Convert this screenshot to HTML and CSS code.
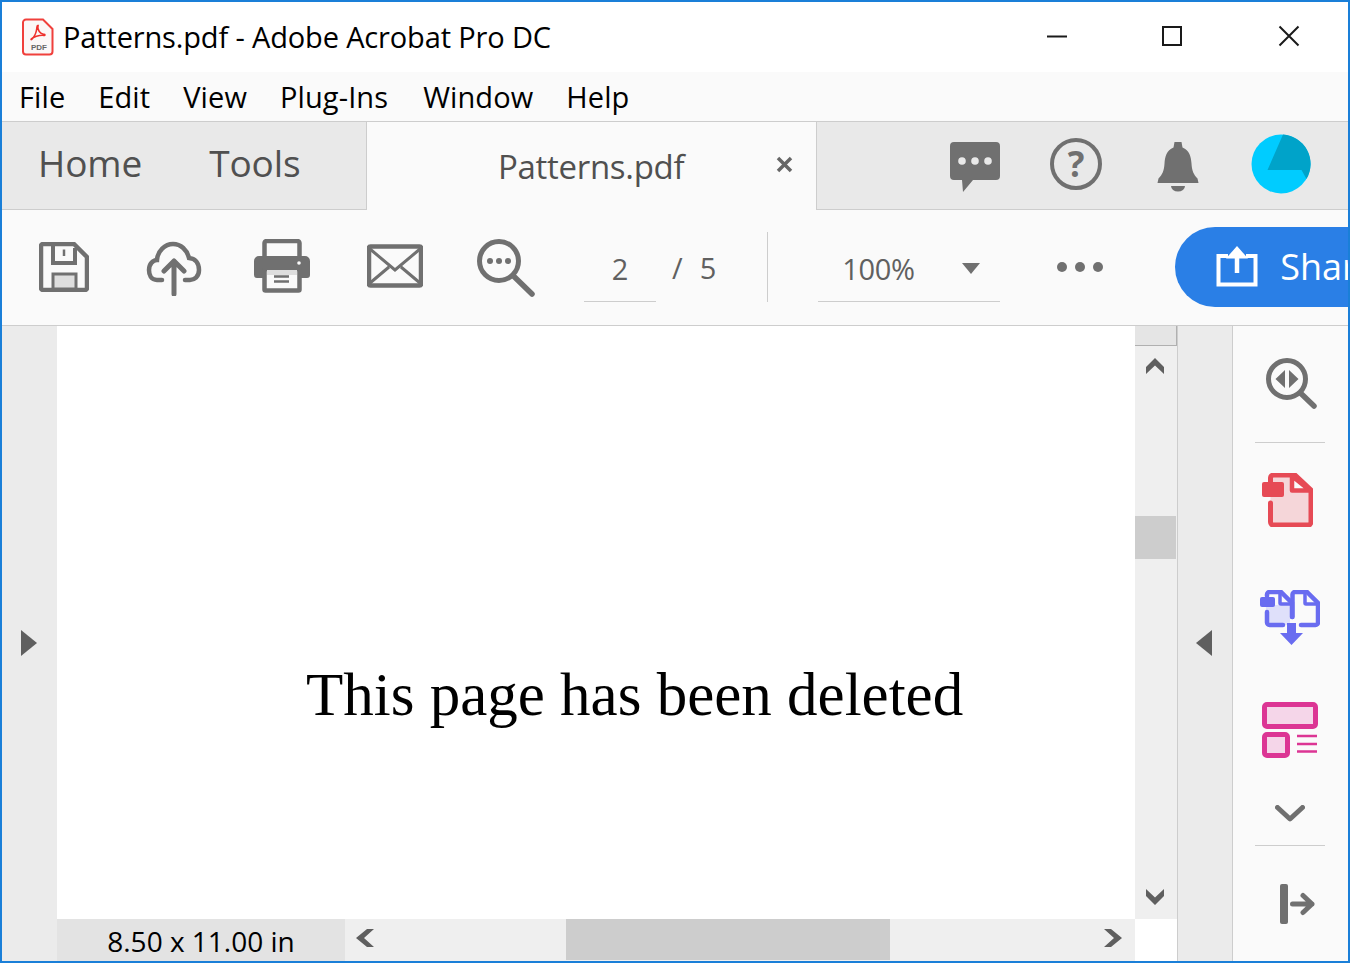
FILE: index.html
```html
<!DOCTYPE html>
<html lang="en">
<head>
<meta charset="utf-8">
<title>Patterns.pdf - Adobe Acrobat Pro DC</title>
<link rel="stylesheet" href="styles.css">
</head>
<body>
<div class="window">
  <header class="titlebar">
    <svg class="app-icon" width="32" height="38" viewBox="0 0 32 38">
      <path d="M4 1.500H21L30.500 11V33.500a3 3 0 0 1-3 3H4a3 3 0 0 1-3-3V4.500a3 3 0 0 1 3-3Z" fill="#fbf7f7" stroke="#f0403c" stroke-width="2"/>
      <path d="M15.500 7.500c-1.500 0 .8 6-4.500 12.500-2 2.500-2.200 1.600-1.800 1 2-2 8-4 12.500-3.600 2 .3 1.500-1.200 0-1.100-3 .1-7-4.500-5.600-8.800Z" fill="none" stroke="#ee2f2c" stroke-width="1.500"/>
      <text x="9" y="31.500" class="pdf-label">PDF</text>
    </svg>
    <div class="title-text">Patterns.pdf - Adobe Acrobat Pro DC</div>
    <div class="win-controls">
      <svg class="win-min" width="22" height="22" viewBox="0 0 22 22"><path d="M1 10.500H21" stroke="#1a1a1a" stroke-width="2"/></svg>
      <svg width="22" height="22" viewBox="0 0 22 22"><rect x="2" y="2" width="18" height="18" fill="none" stroke="#1a1a1a" stroke-width="2"/></svg>
      <svg width="22" height="22" viewBox="0 0 22 22"><path d="M1.500 1.500L20.500 20.500M20.500 1.500L1.500 20.500" stroke="#1a1a1a" stroke-width="2"/></svg>
    </div>
  </header>

  <nav class="menubar">
    <span>File</span><span>Edit</span><span>View</span><span>Plug-Ins</span><span class="menu-window">Window</span><span>Help</span>
  </nav>

  <div class="tabbar">
    <div class="tabs-left"><span>Home</span><span>Tools</span></div>
    <div class="tab-active"><span class="tab-name">Patterns.pdf</span>
      <svg class="tab-close" width="17" height="17" viewBox="0 0 17 17"><path d="M2 2L15 15M15 2L2 15" stroke="#666" stroke-width="3.500"/></svg>
    </div>
    <div class="tabs-right">
      <svg width="50" height="50" viewBox="0 0 50 50"><path d="M4 0H46a4 4 0 0 1 4 4V34a4 4 0 0 1-4 4H23L13 50 12 38H4a4 4 0 0 1-4-4V4a4 4 0 0 1 4-4Z" fill="#707070"/><circle cx="12" cy="19" r="3.800" fill="#e9e9e9"/><circle cx="25" cy="19" r="3.800" fill="#e9e9e9"/><circle cx="38" cy="19" r="3.800" fill="#e9e9e9"/></svg>
      <svg width="52" height="52" viewBox="0 0 52 52"><circle cx="26" cy="26" r="24" fill="none" stroke="#707070" stroke-width="4"/><text x="26" y="39" class="help-mark">?</text></svg>
      <svg width="42" height="50" viewBox="0 0 42 50"><path d="M17.500 0h7l1 5.500c7 3 8.500 9 9 16 .4 7 2 11 6 15l1 4.500H.5l1-4.500c4-4 5.600-8 6-15 .5-7 2-13 9-16Z" fill="#707070"/><path d="M14 44H28a7 5.500 0 0 1-14 0Z" fill="#707070"/></svg>
      <svg width="60" height="60" viewBox="0 0 60 60"><circle cx="30" cy="30" r="29.500" fill="#00ccff"/><path d="M32 .5A29.500 29.500 0 0 1 55.500 45L50.500 36H16.500Z" fill="#00a3c9"/></svg>
    </div>
  </div>

  <div class="toolbar">
    <svg class="t-save" width="50" height="50" viewBox="0 0 50 50"><path d="M4 2H35L48 15V46a2 2 0 0 1-2 2H4a2 2 0 0 1-2-2V4a2 2 0 0 1 2-2Z" fill="none" stroke="#707070" stroke-width="4.500" stroke-linejoin="round"/><path d="M14 3V21H36V6" fill="none" stroke="#707070" stroke-width="4"/><path d="M25 7.500V14" stroke="#707070" stroke-width="2.500"/><rect x="14" y="32" width="23" height="15" fill="#dedede" stroke="#707070" stroke-width="3"/></svg>
    <svg class="t-cloud" width="56" height="56" viewBox="0 0 56 56"><path d="M16 40H11C5 40 3 35 3 30c0-6 4-10 8-10 .5-9 8-16 16-16s14 6 16 14c6 .5 10 5 10 12s-5 10-9 10h-5" fill="none" stroke="#707070" stroke-width="4.500" stroke-linecap="round"/><path d="M28 54V21M18 31L28 21 38 31" fill="none" stroke="#707070" stroke-width="5" stroke-linecap="round" stroke-linejoin="round"/></svg>
    <svg class="t-print" width="56" height="54" viewBox="0 0 56 54"><path d="M10.500 18V4a2 2 0 0 1 2-2h31a2 2 0 0 1 2 2V18" fill="none" stroke="#707070" stroke-width="4.500"/><path d="M5 17H51a5 5 0 0 1 5 5V36a3 3 0 0 1-3 3H47V30H9V39H3a3 3 0 0 1-3-3V22a5 5 0 0 1 5-5Z" fill="#707070"/><rect x="10.500" y="30" width="35" height="21.500" rx="1" fill="#fafafa" stroke="#707070" stroke-width="4.500"/><rect x="13" y="31" width="30" height="5" fill="#dedede"/><path d="M20 37.500H35M20 42.500H35" stroke="#707070" stroke-width="2.500"/><circle cx="45" cy="24" r="1.800" fill="#fafafa"/></svg>
    <svg class="t-mail" width="56" height="44" viewBox="0 0 56 44"><rect x="2" y="2.500" width="52" height="39" rx="1.500" fill="none" stroke="#707070" stroke-width="4.500"/><path d="M3 5L28 26 53 5M3 39L22 23M53 39L34 23" fill="none" stroke="#707070" stroke-width="3"/></svg>
    <svg class="t-search" width="58" height="58" viewBox="0 0 58 58"><circle cx="22" cy="22" r="19.500" fill="none" stroke="#707070" stroke-width="5"/><path d="M36.500 37L55 55" stroke="#707070" stroke-width="5.500" stroke-linecap="round"/><circle cx="13" cy="22" r="3" fill="#707070"/><circle cx="22" cy="22" r="3" fill="#707070"/><circle cx="31" cy="22" r="3" fill="#707070"/></svg>
    <div class="page-field"><span class="page-num">2</span></div>
    <span class="page-sep">/</span><span class="page-total">5</span>
    <div class="tool-divider"></div>
    <div class="zoom-field"><span>100%</span><svg width="18" height="11" viewBox="0 0 18 11"><path d="M0 0H18L9 11Z" fill="#707070"/></svg></div>
    <svg class="t-more" width="46" height="12" viewBox="0 0 46 12"><circle cx="5" cy="6" r="5" fill="#707070"/><circle cx="23" cy="6" r="5" fill="#707070"/><circle cx="41" cy="6" r="5" fill="#707070"/></svg>
    <div class="share-btn">
      <svg width="42" height="41" viewBox="0 0 42 41"><path d="M12 10H2.500V38.500H39.500V10H30" fill="none" stroke="#fff" stroke-width="4"/><path d="M21 27V3" stroke="#fff" stroke-width="4.500"/><path d="M10 12.500L21 0 32 12.500Z" fill="#fff"/></svg>
      <span>Share</span>
    </div>
  </div>

  <main class="workspace">
    <div class="rail-left"><svg width="16" height="26" viewBox="0 0 16 26"><path d="M0 0L16 13 0 26Z" fill="#5f5f5f"/></svg></div>
    <div class="center">
      <div class="center-top">
        <div class="page"><p class="page-text">This page has been deleted</p></div>
        <div class="vscroll">
          <div class="vscroll-cap"></div>
          <svg class="v-up" width="18" height="16" viewBox="0 0 18 16"><path d="M9 0L18 9V16L9 7.500 0 16V9Z" fill="#5f5f5f"/></svg>
          <div class="v-thumb"></div>
          <svg class="v-down" width="18" height="16" viewBox="0 0 18 16"><path d="M9 16L18 7V0L9 8.500 0 0V7Z" fill="#5f5f5f"/></svg>
        </div>
      </div>
      <div class="hbar">
        <div class="status">8.50 x 11.00 in</div>
        <div class="htrack">
          <svg width="18" height="18" viewBox="0 0 18 18"><path d="M0 9L11 0H18L8 9 18 18H11Z" fill="#5f5f5f"/></svg>
          <div class="h-thumb"></div>
          <svg width="18" height="18" viewBox="0 0 18 18"><path d="M18 9L7 0H0L10 9 0 18H7Z" fill="#5f5f5f"/></svg>
        </div>
        <div class="hbar-corner"></div>
      </div>
    </div>
    <div class="rail-right"><svg width="16" height="26" viewBox="0 0 16 26"><path d="M16 0L0 13 16 26Z" fill="#5f5f5f"/></svg></div>
    <aside class="sidebar">
      <svg class="s-find" width="52" height="52" viewBox="0 0 52 52"><circle cx="21" cy="21" r="18.500" fill="none" stroke="#707070" stroke-width="5"/><path d="M35 35.500L48 48" stroke="#707070" stroke-width="5.500" stroke-linecap="round"/><path d="M19 12V30L9.500 21ZM23 12V30L32.500 21Z" fill="#707070"/></svg>
      <div class="side-rule"></div>
      <svg class="s-export" width="52" height="54" viewBox="0 0 52 54"><path d="M9.500 30V49a3 3 0 0 0 3 3H47a3 3 0 0 0 3-3V17L34 2H12.500a3 3 0 0 0-3 3V10" fill="#f5d6d9" stroke="#e64a55" stroke-width="5" stroke-linejoin="round" stroke-linecap="round"/><path d="M31 3V17.500H49Z" fill="#fafafa" stroke="#e64a55" stroke-width="4.500" stroke-linejoin="round"/><rect x="1" y="9" width="22" height="15" rx="2" fill="#e64a55"/></svg>
      <svg class="s-combine" width="60" height="56" viewBox="0 0 60 56"><path d="M6 15H30V35H8a2.500 2.500 0 0 1-2.500-2.500Z" fill="#dfe0fa"/><path d="M7 22V32.500a2.500 2.500 0 0 0 2.500 2.500H23M7 6V4.500a2.500 2.500 0 0 1 2.500-2.500H21L32 13V27" fill="none" stroke="#696cf0" stroke-width="4.500" stroke-linecap="round"/><path d="M32.500 27V4.500a2.500 2.500 0 0 1 2.500-2.500H47L58 13V32.500a2.500 2.500 0 0 1-2.500 2.500H41" fill="none" stroke="#696cf0" stroke-width="4.500" stroke-linecap="round"/><path d="M20 3V13a1 1 0 0 0 1 1H31M45 3V13a1 1 0 0 0 1 1H57" fill="none" stroke="#696cf0" stroke-width="3.500"/><rect x="0" y="7" width="15" height="10" rx="2" fill="#696cf0"/><path d="M27 33H36V43H43L31.500 55 20 43H27Z" fill="#696cf0"/></svg>
      <svg class="s-forms" width="56" height="56" viewBox="0 0 56 56"><rect x="2.500" y="2.500" width="51" height="22" rx="2.500" fill="#f5d6e9" stroke="#dc3594" stroke-width="5"/><rect x="2.500" y="32.500" width="23" height="21" rx="2.500" fill="#f5d6e9" stroke="#dc3594" stroke-width="5"/><path d="M35 34H55M35 42H55M35 49.500H55" stroke="#dc3594" stroke-width="2.500"/></svg>
      <svg class="s-chev" width="30" height="17" viewBox="0 0 30 17"><path d="M2.500 2.500L15 14 27.500 2.500" fill="none" stroke="#707070" stroke-width="5" stroke-linecap="round" stroke-linejoin="round"/></svg>
      <div class="side-rule rule-low"></div>
      <svg class="s-exit" width="36" height="42" viewBox="0 0 36 42"><rect x="1" y="1" width="8" height="40" rx="2" fill="#707070"/><path d="M13.500 21H33M24 12.500L33 21 24 29.500" fill="none" stroke="#707070" stroke-width="5" stroke-linecap="round" stroke-linejoin="round"/></svg>
    </aside>
  </main>
</div>
</body>
</html>
```

FILE: styles.css
```css
* { box-sizing: border-box; }
html, body { margin: 0; padding: 0; }
body { width: 1350px; height: 963px; overflow: hidden; font-family: "Open Sans", "Noto Sans", sans-serif; }
svg { display: block; flex: none; }

.window { width: 1350px; height: 963px; border: 2px solid #1a7fd8; display: flex; flex-direction: column; overflow: hidden; background: #fff; }

.titlebar { height: 70px; flex: none; display: flex; align-items: center; padding: 0 0 2px 20px; background: #fff; }
.app-icon { margin-right: 9px; margin-top: 2px; }
.pdf-label { font: bold 8px "Liberation Sans", sans-serif; fill: #666; }
.title-text { font-size: 29px; color: #000; letter-spacing: -0.15px; white-space: nowrap; }
.win-controls { margin-left: auto; display: flex; gap: 95px; padding-right: 48px; }
.win-min { margin: 1px -2px 0 2px; }

.menubar { height: 50px; flex: none; display: flex; align-items: center; gap: 33px; padding: 0 0 0 17px; background: #fafafa; border-bottom: 1px solid #cdcdcd; font-size: 29px; color: #000; letter-spacing: 0.1px; }
.menu-window { margin-left: 2px; }

.tabbar { height: 88px; flex: none; display: flex; background: #e9e9e9; }
.tabs-left { width: 364px; flex: none; display: flex; gap: 67px; align-items: center; padding: 0 0 6px 36px; border-bottom: 1px solid #cdcdcd; font-size: 37px; color: #505050; letter-spacing: -0.1px; }
.tab-active { width: 451px; flex: none; background: #fafafa; border-left: 1px solid #cdcdcd; border-right: 1px solid #cdcdcd; display: flex; align-items: center; padding-left: 131px; }
.tab-name { font-size: 33px; color: #505050; letter-spacing: -0.3px; }
.tab-close { margin-left: 92px; margin-top: -3px; }
.tabs-right { flex: 1; display: flex; align-items: center; padding: 0 0 4px 133px; border-bottom: 1px solid #cdcdcd; }
.tabs-right svg:nth-child(1) { margin-top: 6px; }
.tabs-right svg:nth-child(2) { margin-left: 50px; }
.tabs-right svg:nth-child(3) { margin: 6px 0 0 55px; }
.tabs-right svg:nth-child(4) { margin-left: 52px; }
.help-mark { font: bold 35px "Open Sans", sans-serif; fill: #707070; text-anchor: middle; }

.toolbar { height: 116px; flex: none; display: flex; align-items: center; padding-left: 37px; background: #fafafa; border-bottom: 1px solid #cdcdcd; color: #606060; font-size: 29px; overflow: hidden; }
.t-save { margin-top: -2px; }
.t-cloud { margin-left: 57px; }
.t-print { margin-left: 52px; margin-top: -4px; }
.t-mail { margin-left: 57px; margin-top: -4px; }
.t-search { margin-left: 54px; }
.page-field { width: 72px; height: 66px; flex: none; margin: 3px 0 0 49px; border-bottom: 1px solid #cdcdcd; display: flex; justify-content: center; align-items: center; }
.page-sep { margin-left: 16px; flex: none; }
.page-total { margin-left: 17px; flex: none; }
.page-num, .page-sep, .page-total { color: #606060; }
.tool-divider { width: 1px; height: 70px; flex: none; margin: -2px 0 0 51px; background: #cdcdcd; }
.zoom-field { width: 182px; height: 66px; flex: none; margin: 3px 0 0 50px; padding: 0 20px 0 24px; border-bottom: 1px solid #cdcdcd; display: flex; justify-content: space-between; align-items: center; letter-spacing: -0.3px; }
.t-more { margin-left: 57px; margin-top: -2px; }
.share-btn { flex: none; width: 240px; height: 80px; margin-left: 72px; margin-top: -2px; padding-left: 41px; border-radius: 40px 0 0 40px; background: #2a7fe6; color: #fff; display: flex; align-items: center; gap: 22px; font-size: 36px; }

.workspace { flex: 1; min-height: 0; display: flex; background: #ebebeb; }
.rail-left { width: 55px; flex: none; display: flex; align-items: center; padding-left: 19px; }
.rail-right { width: 56px; flex: none; display: flex; align-items: center; padding-left: 18px; border-left: 1px solid #cdcdcd; border-right: 1px solid #cdcdcd; }
.rail-left svg, .rail-right svg { margin-top: -2px; }
.center { width: 1120px; flex: none; display: flex; flex-direction: column; }
.center-top { flex: 1; min-height: 0; display: flex; }
.page { width: 1078px; flex: none; background: #fff; padding: 330px 0 0 249px; }
.page-text { margin: 0; font: 61px "Liberation Serif", serif; color: #000; white-space: nowrap; line-height: 78px; }

.vscroll { width: 42px; flex: none; background: #efefef; display: flex; flex-direction: column; align-items: center; }
.vscroll-cap { width: 100%; height: 20px; flex: none; background: #e5e5e5; border-bottom: 1px solid #b0b0b0; border-right: 1px solid #b0b0b0; }
.v-up { margin: 12px 2px 0 0; }
.v-thumb { width: 41px; height: 43px; margin: 142px 1px 0 0; background: #cdcdcd; flex: none; }
.v-down { margin: auto 2px 14px 0; }

.hbar { height: 42px; flex: none; display: flex; }
.status { width: 288px; flex: none; background: #e3e3e3; font-size: 28px; color: #000; display: flex; justify-content: center; align-items: center; padding-top: 2px; }
.htrack { width: 790px; flex: none; background: #efefef; display: flex; align-items: center; padding: 0 13px 4px 11px; }
.h-thumb { width: 324px; height: 41px; margin-left: 192px; align-self: flex-start; background: #cdcdcd; flex: none; }
.htrack svg:last-child { margin-left: auto; }
.hbar-corner { flex: 1; background: #fff; }

.sidebar { flex: 1; background: #fafafa; display: flex; flex-direction: column; align-items: center; padding-right: 2px; }
.side-rule { width: 70px; height: 1px; flex: none; background: #cdcdcd; margin-top: 32px; }
.s-find { margin-top: 32px; transform: translateX(2px); }
.s-export { margin-top: 30px; transform: translateX(-3px); }
.s-combine { margin-top: 63px; }
.s-forms { margin-top: 56px; }
.s-chev { margin-top: 47px; }
.rule-low { margin-top: 23px; }
.s-exit { margin-top: 37px; transform: translateX(7px); }
```
